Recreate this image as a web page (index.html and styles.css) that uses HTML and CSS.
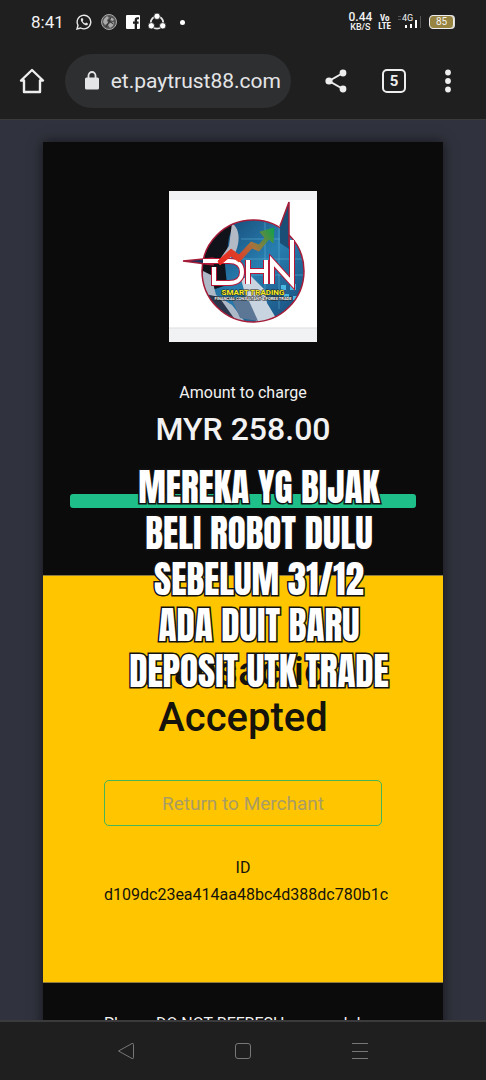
FILE: index.html
```html
<!DOCTYPE html>
<html lang="ms">
<head>
  <meta charset="UTF-8">
  <meta name="viewport" content="width=device-width, initial-scale=1.0">
  <title>Transaction Accepted</title>
  <link rel="stylesheet" href="styles.css">
</head>
<body>
  <div class="status-bar">
    <div class="status-left">
      <span class="clock">8:41</span>
      <svg width="16" height="16" viewBox="0 0 16 16" fill="none" stroke="#e8e8e8" stroke-width="1.4">
        <path d="M1 15l1-3.700A6.800 6.800 0 1 1 4.700 14z"/>
        <path d="M5.300 4.300c-1 1.200-.4 3 1.400 4.900s3.700 2.600 4.900 1.700l.3-1.500-1.800-.9-.9.900C7.900 8.900 7 8 6.600 7l.8-.9-.7-1.800z" fill="#e8e8e8" stroke="none"/>
      </svg>
      <svg width="18" height="18" viewBox="0 0 18 18">
        <circle cx="9" cy="9" r="7.500" fill="#555" stroke="#aaa"/>
        <path d="M4 6l3-3 2 2-2 2 1 3-3 2-2-3zM10 4l4 2-1 2-3-1zM10 10l4-1-1 4-3 2-2-3z" fill="#aaa"/>
        <path d="M6 14l3-5 2-5M8 7l5 4" fill="none" stroke="#333"/>
      </svg>
      <svg width="14" height="14" viewBox="0 0 14 14">
        <path d="M1 0h12a1 1 0 0 1 1 1v12a1 1 0 0 1-1 1h-2V8.700h1.600V6.600H11V5.300q0-1 1-1h1V2.200h-1.700Q8.700 2.200 8.700 5v1.600H7v2.100h1.700V14H1a1 1 0 0 1-1-1V1a1 1 0 0 1 1-1z" fill="#fff"/>
      </svg>
      <svg width="18" height="18" viewBox="0 0 18 18">
        <circle cx="9" cy="9.500" r="6.200" fill="none" stroke="#e8e8e8" stroke-width="1.800"/>
        <g fill="#fff" stroke="#1f1f1f" stroke-width=".8">
          <circle cx="9" cy="3.300" r="3.200"/>
          <circle cx="3.300" cy="12.800" r="3.200"/>
          <circle cx="14.700" cy="12.800" r="3.200"/>
        </g>
      </svg>
      <span class="dot"></span>
    </div>
    <div class="status-right">
      <span class="speed"><b>0.44</b><br>KB/S</span>
      <span class="volte">Vo<br>LTE</span>
      <span class="signal">
        <span class="network">4G</span>
        <svg width="26" height="16" viewBox="0 0 26 16">
          <path d="M1 2.500h3M1 5.500h3" stroke="#555"/>
          <path d="M8 11h2v3H8zM13 10h2v4h-2zM18 6h2v8h-2z" fill="#fff"/>
          <path d="M23 2h1v12h-1z" fill="#555"/>
        </svg>
      </span>
      <span class="battery">85</span>
    </div>
  </div>

  <header class="toolbar">
    <button class="icon-btn home" aria-label="Home">
      <svg width="26" height="26" viewBox="0 0 26 26" fill="none" stroke="#eee" stroke-width="2.400" stroke-linejoin="round">
        <path d="M5 12.500H2L13 2l11 10.500h-3V24H5z"/>
      </svg>
    </button>
    <a class="address" href="#">
      <svg width="14" height="19" viewBox="0 0 14 19">
        <path d="M3.500 7V4.500a3.500 3.500 0 0 1 7 0V7" fill="none" stroke="#e4e5e7" stroke-width="1.800"/>
        <rect y="6.500" width="14" height="12" rx="1.500" fill="#e4e5e7"/>
      </svg>
      <span class="url"><span>et.paytrust88.com</span></span>
    </a>
    <button class="icon-btn" aria-label="Share">
      <svg width="22" height="24" viewBox="0 0 22 24">
        <path d="M18 4L4 12l14 8" fill="none" stroke="#eee" stroke-width="2"/>
        <circle cx="18" cy="4" r="3.400" fill="#eee"/>
        <circle cx="4" cy="12" r="3.600" fill="#eee"/>
        <circle cx="18" cy="20" r="3.400" fill="#eee"/>
      </svg>
    </button>
    <button class="tabs" aria-label="Tabs">5</button>
    <button class="icon-btn" aria-label="Menu">
      <svg width="8" height="24" viewBox="0 0 8 24" fill="#eee">
        <circle cx="4" cy="3.500" r="2.900"/>
        <circle cx="4" cy="12" r="2.900"/>
        <circle cx="4" cy="20.500" r="2.900"/>
      </svg>
    </button>
  </header>

  <main class="page">
    <div class="card">
      <section class="charge">
        <svg class="logo" viewBox="0 0 148 151" role="img" aria-label="DHN Smart Trading">
          <defs>
            <linearGradient id="sky" x1="0" y1="0" x2="1" y2="1">
              <stop offset="0" stop-color="#123c66"/>
              <stop offset=".5" stop-color="#287eb0"/>
              <stop offset="1" stop-color="#174776"/>
            </linearGradient>
            <linearGradient id="rise" x1="50" y1="72" x2="104" y2="38" gradientUnits="userSpaceOnUse">
              <stop offset="0" stop-color="#e92a22"/>
              <stop offset=".3" stop-color="#e03c26"/>
              <stop offset=".6" stop-color="#a6743d"/>
              <stop offset="1" stop-color="#15a048"/>
            </linearGradient>
            <clipPath id="disc"><circle cx="84" cy="80" r="51"/></clipPath>
          </defs>
          <rect width="148" height="151" fill="#fff"/>
          <path d="M0 0h148v9H0zM0 137h148v14H0z" fill="#f1f2f4"/>
          <path d="M0 137h148" stroke="#ddd"/>
          <g clip-path="url(#disc)">
            <rect x="32" y="28" width="104" height="104" fill="url(#sky)"/>
            <path d="M72 48h64M72 68h64M76 84h60M96 28v76M110 28v90" stroke="#67b9d9" stroke-width=".5"/>
            <path d="M32 28h35l-7 18-4 28 2 20-24 8-12-10z" fill="#11131a"/>
            <path d="M63 32c8 6 8 18 4 28l-9 12-7-4 9-13z" fill="#b3bac6"/>
            <path d="M34 80l8 4 5 20 16 10 14 18H45L31 110z" fill="#aeb9c7"/>
            <path d="M36 103l14 3 17 24-19-6z" fill="#29364c"/>
            <path d="M72 88l10-3 14 14 2 13 12 20H88l-10-22z" fill="#c8d4df"/>
            <path d="M62 106l18 4 9 20-18-3z" fill="#5c7795"/>
            <path d="M112 94h5v5h-5zM121 93h6v6h-6zM115 103h5v5h-5zM124 105h4v4h-4z" fill="#49b7df"/>
          </g>
          <circle cx="84" cy="80" r="51" fill="none" stroke="#a51c39" stroke-width="1.500"/>
          <path d="M111 35L120 11v47l-9-6z" fill="#1b4e77"/>
          <path d="M111 35L120 11v44" fill="none" stroke="#a51c39" stroke-width="1.500"/>
          <path d="M14 70l30-3v7z" fill="#17345a" stroke="#a51c39" stroke-width="1.500"/>
          <g fill="none" stroke-linejoin="miter">
            <path d="M34 70h26c10 0 13 5 13 11s-4 11-13 11H45V76M79 69v24M97 69v24M79 80h18M103 93V70l20 22V49" stroke="#b91738" stroke-width="6"/>
            <path d="M34 70h26c10 0 13 5 13 11s-4 11-13 11H45V76M79 69v24M97 69v24M79 80h18M103 93V70l20 22V49" stroke="#fff" stroke-width="4"/>
          </g>
          <path d="M49 70l13-12 8 6 12-13 8 3 6-7-5-6 14-4-1 15-4-4-10 12-7-3-13 14-8-6-11 9z" fill="url(#rise)" stroke="url(#rise)"/>
          <text class="logo-name" x="84" y="104">SMART TRADING</text>
          <text class="logo-tagline" x="84" y="109">FINANCIAL CONSULTANT &amp; FOREX TRADE</text>
        </svg>
        <p class="label">Amount to charge</p>
        <p class="amount">MYR 258.00</p>
        <div class="progress"></div>
      </section>
      <section class="result">
        <h1>Transaction Accepted</h1>
        <button class="return-btn">Return to Merchant</button>
        <p class="ref">ID<br>d109dc23ea414aa48bc4d388dc780b1c</p>
      </section>
      <section class="notice">
        <p>Please DO NOT REFRESH your web browser</p>
      </section>
    </div>
    <p class="caption">MEREKA YG BIJAK<br>BELI ROBOT DULU<br>SEBELUM 31/12<br>ADA DUIT BARU<br>DEPOSIT UTK TRADE</p>
  </main>

  <nav class="nav-bar">
    <button class="icon-btn" aria-label="Back">
      <svg width="18" height="18" viewBox="0 0 18 18" fill="none" stroke="#777" stroke-linejoin="round"><path d="M1.500 9L15 1.500q1.500-.5 1.500 1v13q0 1.500-1.500 1z"/></svg>
    </button>
    <button class="icon-btn" aria-label="Home screen">
      <svg width="18" height="18" viewBox="0 0 18 18" fill="none" stroke="#777"><rect x="1.500" y="1.500" width="15" height="15" rx="2.500"/></svg>
    </button>
    <button class="icon-btn" aria-label="Recent apps">
      <svg width="18" height="18" viewBox="0 0 18 18" stroke="#777"><path d="M1 1.500h16M1 9.500h16M1 16.500h16"/></svg>
    </button>
  </nav>
</body>
</html>
```
FILE: styles.css
```css
* {
  box-sizing: border-box;
}

body {
  margin: 0;
  height: 100vh;
  display: flex;
  flex-direction: column;
  overflow: hidden;
  font-family: Roboto, sans-serif;
  background: #1f1f1f;
  color: #f2f2f2;
}

p, h1 {
  margin: 0;
}

button {
  font-family: inherit;
  padding: 0;
  border: none;
  background: none;
}

.icon-btn {
  display: flex;
  align-items: center;
  justify-content: center;
}

/* Phone status bar */
.status-bar {
  flex: none;
  height: 44px;
  padding: 0 32px 0 31px;
  display: flex;
  justify-content: space-between;
  align-items: center;
}

.status-left, .status-right {
  display: flex;
  align-items: center;
}

.status-left {
  gap: 8px;
}

.clock {
  font-size: 17px;
  margin-right: 4px;
}

.dot {
  width: 5px;
  height: 5px;
  margin-left: 6px;
  border-radius: 50%;
  background: #fff;
}

.status-right {
  gap: 6px;
}

.speed {
  font-size: 9px;
  font-weight: 500;
  line-height: 9px;
  text-align: center;
}

.speed b {
  font-size: 12px;
  font-weight: 500;
}

.volte {
  font-family: "Roboto Condensed", Roboto, sans-serif;
  font-size: 9px;
  line-height: 8px;
  font-weight: 700;
  text-align: center;
}

.signal {
  position: relative;
  display: flex;
}

.network {
  position: absolute;
  left: 5px;
  top: 0;
  font-size: 9px;
  line-height: 8px;
}

.battery {
  width: 25px;
  height: 14px;
  border: 1px solid #eee;
  border-radius: 4px;
  background: #988441;
  font-size: 10px;
  line-height: 12px;
  text-align: center;
  box-shadow: 1px 0 #ddd;
}

/* Browser toolbar */
.toolbar {
  flex: none;
  height: 76px;
  padding: 0 34px 2px 19px;
  display: flex;
  align-items: center;
  border-bottom: 1px solid #3b3b3e;
}

.address {
  flex: 1;
  min-width: 0;
  height: 54px;
  margin: 0 34px 0 20px;
  padding: 0 10px 0 20px;
  display: flex;
  align-items: center;
  gap: 12px;
  border-radius: 27px;
  background: #2e2f31;
  color: #e4e5e7;
  text-decoration: none;
}

.url {
  flex: 1;
  min-width: 0;
  display: flex;
  justify-content: flex-end;
  overflow: hidden;
  font-size: 21px;
  line-height: 28px;
  white-space: nowrap;
}

.tabs {
  width: 24px;
  height: 24px;
  margin: 0 38px 0 35px;
  border: 2px solid #eee;
  border-radius: 5px;
  color: #eee;
  font-size: 15px;
  font-weight: 700;
  line-height: 20px;
}

/* Payment page */
.page {
  flex: 1;
  min-height: 0;
  position: relative;
  padding: 22px 43px 0;
  overflow: hidden;
  background: #30323d;
}

.card {
  background: #0b0b0b;
  box-shadow: 0 0 12px rgba(0, 0, 0, 0.6);
  text-align: center;
}

.charge {
  padding: 49px 27px 67px;
}

.logo {
  display: block;
  width: 148px;
  margin: 0 auto;
}

.logo-name {
  font: 700 8px Roboto, sans-serif;
  fill: #f7ed25;
  stroke: #222;
  stroke-width: 1px;
  paint-order: stroke fill;
  text-anchor: middle;
}

.logo-tagline {
  font: 700 4px Roboto, sans-serif;
  fill: #fff;
  stroke: #222;
  stroke-width: 1px;
  paint-order: stroke fill;
  text-anchor: middle;
}

.label {
  margin-top: 39px;
  font-size: 16px;
  line-height: 24px;
}

.amount {
  margin-top: 4px;
  font-size: 32px;
  font-weight: 500;
  line-height: 40px;
}

.progress {
  height: 14px;
  margin-top: 45px;
  border-radius: 3px;
  background: #1ebf88;
}

.result {
  padding: 73px 61px 74px;
  border-top: 1px solid #8d7b40;
  border-bottom: 1px solid #8d7b40;
  background: #ffc600;
  color: #15130b;
}

h1 {
  font-size: 40px;
  font-weight: 500;
  line-height: 46px;
}

.return-btn {
  display: block;
  width: 100%;
  height: 46px;
  margin: 39px 0 28px;
  border: 1px solid #45b557;
  border-radius: 5px;
  color: #aa9c64;
  font-size: 19px;
}

.ref {
  font-size: 16px;
  line-height: 27px;
  white-space: nowrap;
}

.notice {
  padding: 29px 0 29px 61px;
  font-size: 16px;
  line-height: 24px;
  text-align: left;
}

/* Caption laid over the page */
.caption {
  position: absolute;
  top: 344px;
  left: 0;
  right: 0;
  padding-left: 32px;
  color: #fff;
  font-family: Anton, "Roboto Condensed", Roboto, sans-serif;
  font-size: 37px;
  font-weight: 400;
  line-height: 46px;
  text-align: center;
  -webkit-text-stroke: 3px #111;
  paint-order: stroke fill;
}

/* Android navigation */
.nav-bar {
  flex: none;
  height: 60px;
  padding: 0 117px;
  display: flex;
  align-items: center;
  justify-content: space-between;
  border-top: 2px solid #3b3b3e;
}
```
